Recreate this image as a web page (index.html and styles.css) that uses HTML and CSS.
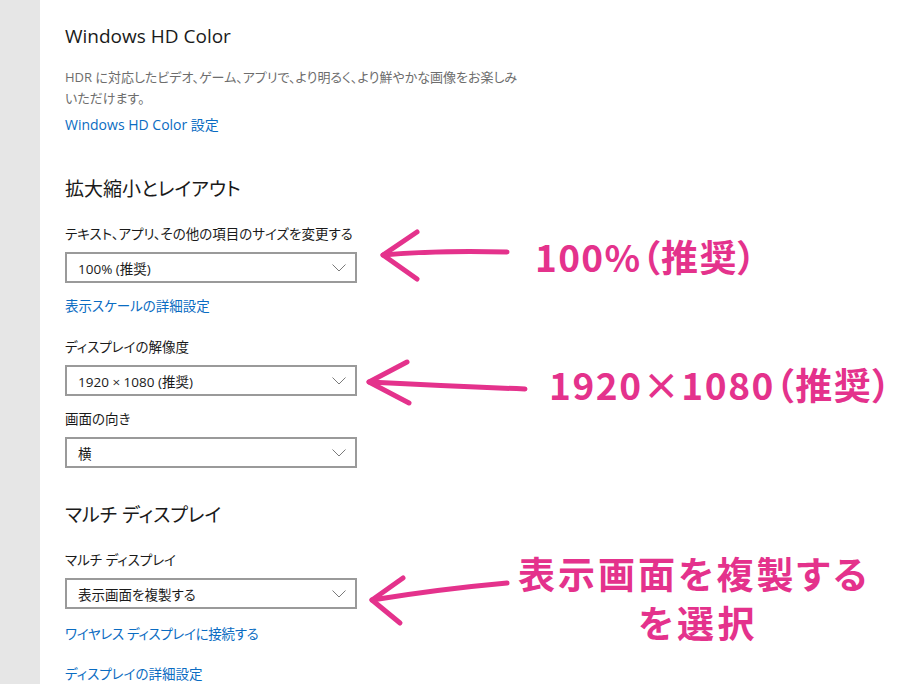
FILE: index.html
```html
<!DOCTYPE html>
<html lang="ja">
<head>
<meta charset="utf-8">
<title>ディスプレイ設定</title>
<link rel="stylesheet" href="styles.css">
</head>
<body>
<div class="page">
  <aside class="sidebar"></aside>
  <main class="content">
    <h2 class="title title-first">Windows HD Color</h2>
    <p class="desc">HDR に対応したビデオ、ゲーム、アプリで、より明るく、より鮮やかな画像をお楽しみ<br>いただけます。</p>
    <a class="link link-hd">Windows HD Color 設定</a>

    <h2 class="title title-scale">拡大縮小とレイアウト</h2>
    <div class="label label-first">テキスト、アプリ、その他の項目のサイズを変更する</div>
    <div class="select"><span>100% (推奨)</span><svg class="chev" width="14" height="8" viewBox="0 0 14 8"><path d="M0.5 0.5 L7 7 L13.5 0.5" fill="none" stroke="#7a7a7a" stroke-width="1"/></svg></div>
    <a class="link link-after">表示スケールの詳細設定</a>

    <div class="label label-gap">ディスプレイの解像度</div>
    <div class="select"><span>1920 × 1080 (推奨)</span><svg class="chev" width="14" height="8" viewBox="0 0 14 8"><path d="M0.5 0.5 L7 7 L13.5 0.5" fill="none" stroke="#7a7a7a" stroke-width="1"/></svg></div>
    <div class="label label-near">画面の向き</div>
    <div class="select"><span>横</span><svg class="chev" width="14" height="8" viewBox="0 0 14 8"><path d="M0.5 0.5 L7 7 L13.5 0.5" fill="none" stroke="#7a7a7a" stroke-width="1"/></svg></div>

    <h2 class="title title-multi">マルチ ディスプレイ</h2>
    <div class="label label-first">マルチ ディスプレイ</div>
    <div class="select select-multi"><span>表示画面を複製する</span><svg class="chev" width="14" height="8" viewBox="0 0 14 8"><path d="M0.5 0.5 L7 7 L13.5 0.5" fill="none" stroke="#7a7a7a" stroke-width="1"/></svg></div>
    <a class="link link-after2">ワイヤレス ディスプレイに接続する</a>
    <a class="link link-last">ディスプレイの詳細設定</a>
  </main>

  <svg class="arrows" width="900" height="684" viewBox="0 0 900 684">
    <g fill="none" stroke="#e4328c" stroke-width="5" stroke-linecap="round" stroke-linejoin="round">
      <path d="M383 255 Q 440 250 507 252"/>
      <path d="M417 232 L383 255 L417 279"/>
      <path d="M369 382 Q 450 386 525 389"/>
      <path d="M407 362 L369 382 L409 403"/>
      <path d="M372 600 Q 440 589 507 583"/>
      <path d="M403 578 L372 600 L400 623"/>
    </g>
  </svg>
  <div class="note note-1">100%（推奨）</div>
  <div class="note note-2">1920×1080（推奨）</div>
  <div class="note note-3">表示画面を複製する</div>
  <div class="note note-4">を選択</div>
</div>
</body>
</html>
```

FILE: styles.css
```css
html, body {
  margin: 0;
  padding: 0;
  background: #ffffff;
}

.page {
  position: relative;
  width: 900px;
  height: 684px;
  overflow: hidden;
  display: flex;
  font-family: "Open Sans", "Noto Sans CJK JP", sans-serif;
  font-feature-settings: "palt";
  color: #000;
}

.sidebar {
  width: 40px;
  flex: none;
  background: #e6e6e6;
}

.content {
  flex: 1;
  display: flex;
  flex-direction: column;
  align-items: flex-start;
  padding: 22px 0 0 25px;
}

.title {
  margin: 0;
  font-size: 19px;
  font-weight: 400;
  line-height: 28px;
  color: #1a1a1a;
}

.title-scale { margin-top: 40px; }
.title-multi { margin-top: 33px; }

.desc {
  margin: 17px 0 0;
  font-size: 13px;
  line-height: 21px;
  color: #6d6d6d;
}

.link {
  display: block;
  font-size: 13.5px;
  line-height: 20px;
  color: #0a6cc2;
}

.link-hd { margin-top: 6px; font-size: 14px; }
.link-after { margin-top: 13px; }
.link-after2 { margin-top: 15px; letter-spacing: -0.3px; }
.link-last { margin-top: 20px; }

.label {
  font-size: 13.5px;
  line-height: 20px;
  color: #1a1a1a;
}

.label-first { margin-top: 21px; }
.label-gap { margin-top: 21px; }
.label-near { margin-top: 13px; }

.select {
  box-sizing: border-box;
  width: 292px;
  height: 36px;
  margin-top: 8px;
  border: 2px solid #9a9a9a;
  display: flex;
  align-items: center;
  justify-content: space-between;
  padding: 0 9px 0 11px;
  font-size: 13.5px;
  color: #1a1a1a;
}

.select-multi { margin-top: 8px; }

.chev { flex: none; }

.arrows {
  position: absolute;
  left: 0;
  top: 0;
  pointer-events: none;
}

.note {
  position: absolute;
  font-family: "Noto Sans CJK JP", sans-serif;
  font-weight: 700;
  font-size: 37px;
  line-height: 44px;
  color: #e4328c;
  white-space: nowrap;
}

.note-1 { left: 535px; top: 234px; letter-spacing: 1.3px; }
.note-2 { left: 549px; top: 362px; letter-spacing: 1.6px; }
.note-3 {
  left: 518px;
  top: 551px;
  letter-spacing: 3px;
}
.note-4 {
  left: 638px;
  top: 600px;
  letter-spacing: 3.5px;
}
```
